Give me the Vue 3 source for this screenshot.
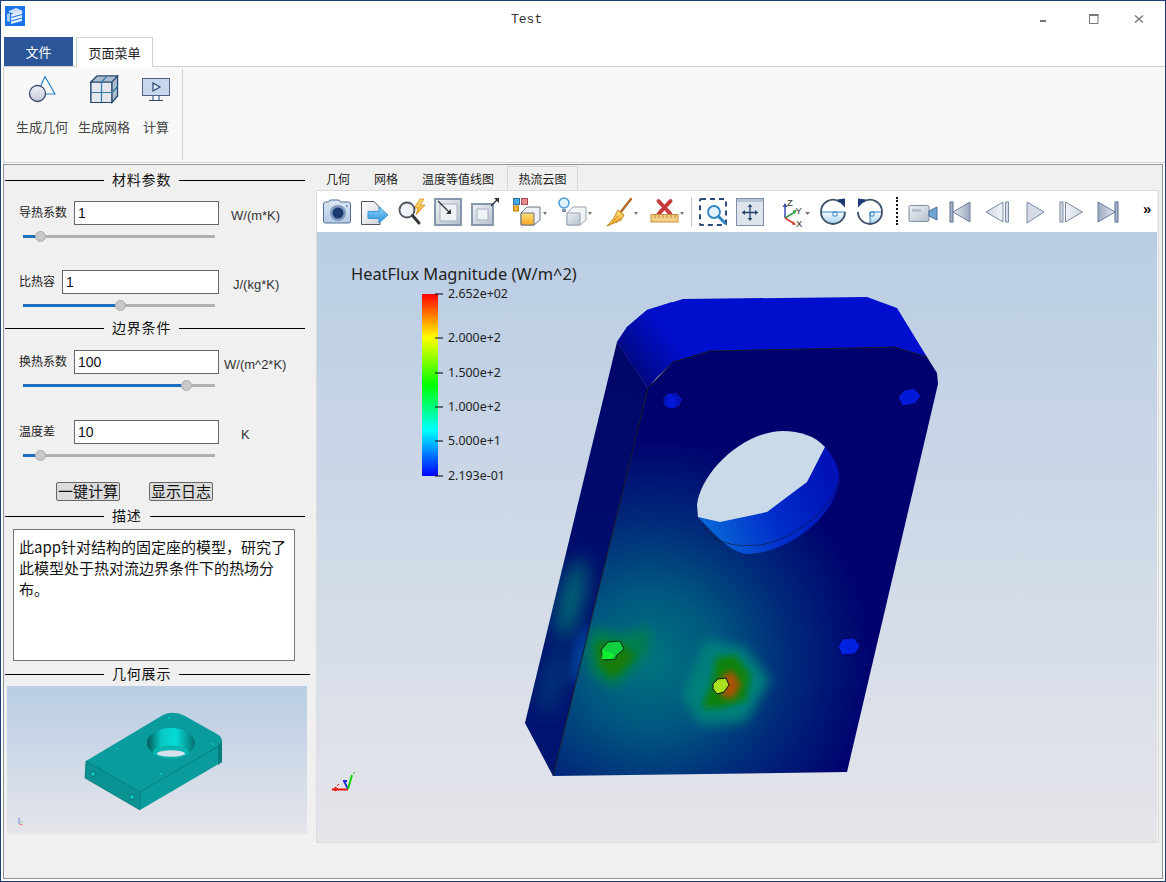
<template>
  <div class="window">
    <header class="titlebar">
      <svg class="app-icon" width="20" height="20" viewBox="0 0 20 20">
        <rect width="20" height="20" fill="#1a73e8" />
        <path d="M3 5.500L11 2l7 3-8 3.500z" fill="#cfe3fb" />
        <path d="M2 8l3-1v9l-3-1z" fill="#a9cdf8" />
        <path d="M6 8.500l11-3v2.500l-11 3zM6 12l11-3v2.500l-11 3zM6 15.500l11-3V15l-11 3z" fill="#e4f0fe" />
      </svg>
      <span class="title">Test</span>
      <div class="win-btns">
        <svg width="10" height="10" viewBox="0 0 10 10"><path d="M0 7h6" stroke="#777" stroke-width="2" /></svg>
        <svg width="10" height="10" viewBox="0 0 10 10"><path d="M.5 1h8.500v8.500H.5z" fill="none" stroke="#777" /><path d="M0 1h9.500" stroke="#777" stroke-width="2" /></svg>
        <svg width="10" height="10" viewBox="0 0 10 10"><path d="M1 1.500l8 7M9 1.500l-8 7" stroke="#777" stroke-width="1.400" /></svg>
      </div>
    </header>

    <nav class="menu-tabs">
      <div class="file-tab">文件</div>
      <div class="page-tab">页面菜单</div>
    </nav>

    <section class="ribbon">
      <div class="ribbon-group">
        <div class="ribbon-btn btn-geo">
          <svg width="28" height="28" viewBox="0 0 28 28">
            <defs>
              <linearGradient id="circ" x1="0" y1="0" x2="0" y2="1">
                <stop offset="0" stop-color="#f2f3f8" /><stop offset="1" stop-color="#c3c7d6" />
              </linearGradient>
            </defs>
            <path d="M17 1.500L27 19H9z" fill="#f8fafc" stroke="#2a82c4" stroke-width="1.200" />
            <circle cx="9.500" cy="18.500" r="8" fill="url(#circ)" stroke="#3c4a72" stroke-width="1.300" />
          </svg>
          <span>生成几何</span>
        </div>
        <div class="ribbon-btn btn-mesh">
          <svg width="30" height="30" viewBox="0 0 30 30">
            <path d="M2 8L8 2H28.500v20l-6 6.500H2z" fill="#dfe5ec" stroke="#27466f" stroke-width="1.200" />
            <path d="M2 8h21v20.500H2z" fill="#e4e8ee" stroke="#27466f" stroke-width="1.200" />
            <path d="M2 8L8 2H28.500L23 8zM23 8l5.500-6v20L23 28.500z" fill="#a9bccd" stroke="#27466f" stroke-width="1.200" />
            <path d="M12.500 8v20.500M2 18.500h21M18 2l-5.500 6M23 18.500l5.500-6" stroke="#3079a8" stroke-width="1.200" fill="none" />
          </svg>
          <span>生成网格</span>
        </div>
        <div class="ribbon-btn btn-calc">
          <svg width="28" height="24" viewBox="0 0 28 24">
            <rect x=".5" y=".5" width="27" height="17" fill="#c7d8ee" stroke="#4c6188" />
            <path d="M11 5l7 4-7 4z" fill="#dfeaf6" stroke="#27466f" stroke-width="1.200" />
            <path d="M11 18v4M17 18v4" stroke="#6a7ca0" stroke-width="1.500" />
            <path d="M7 22.500h14" stroke="#27466f" />
          </svg>
          <span>计算</span>
        </div>
      </div>
    </section>

    <main class="frame">
      <aside class="side">
        <h3 class="group-title">材料参数</h3>
        <div class="param first">
          <div class="param-row">
            <label class="lab-wide">导热系数</label>
            <input value="1" />
            <span class="unit u1">W/(m*K)</span>
          </div>
          <div class="slider"><i :style="{ width: '17px' }"></i><b :style="{ left: '12px' }"></b></div>
        </div>
        <div class="param short">
          <div class="param-row">
            <label class="lab-narrow">比热容</label>
            <input class="long" value="1" />
            <span class="unit u2">J/(kg*K)</span>
          </div>
          <div class="slider"><i :style="{ width: '97px' }"></i><b :style="{ left: '92px' }"></b></div>
        </div>
        <h3 class="group-title second">边界条件</h3>
        <div class="param third">
          <div class="param-row">
            <label class="lab-wide">换热系数</label>
            <input value="100" />
            <span class="unit u3">W/(m^2*K)</span>
          </div>
          <div class="slider"><i :style="{ width: '163px' }"></i><b :style="{ left: '158px' }"></b></div>
        </div>
        <div class="param fourth">
          <div class="param-row">
            <label class="lab-wide">温度差</label>
            <input value="10" />
            <span class="unit u4">K</span>
          </div>
          <div class="slider"><i :style="{ width: '17px' }"></i><b :style="{ left: '12px' }"></b></div>
        </div>
        <div class="actions">
          <button>一键计算</button>
          <button>显示日志</button>
        </div>
        <h3 class="group-title third-title">描述</h3>
        <div class="desc">此app针对结构的固定座的模型，研究了此模型处于热对流边界条件下的热场分布。</div>
        <h3 class="group-title last">几何展示</h3>
        <div class="thumb">
          <svg width="300" height="148" viewBox="7 686 300 148">
            <defs>
              <linearGradient id="bore" x1="0" y1="0" x2="1" y2="0">
                <stop offset="0" stop-color="#045a5a" />
                <stop offset=".3" stop-color="#06c8c4" />
                <stop offset=".6" stop-color="#06dcd8" />
                <stop offset="1" stop-color="#057272" />
              </linearGradient>
            </defs>
            <path d="M86 761L163 715Q173 710 185 716L217 734Q222 737 222 741V762L140 810L85 778z" fill="#0a9c9c" />
            <path d="M86 761L140 792V810L85 778z" fill="#0a9292" stroke="#067272" stroke-width=".6" />
            <path d="M140 792L219 746" stroke="#067676" stroke-width=".7" fill="none" />
            <path d="M218 745Q222 742 222 741V762L218 765z" fill="#067c7c" />
            <ellipse cx="171" cy="743" rx="24" ry="15" fill="url(#bore)" />
            <ellipse cx="171" cy="752" rx="18" ry="6.500" fill="#06b4b0" />
            <ellipse cx="171" cy="753.500" rx="14" ry="3.200" fill="#d6e1ec" />
            <circle cx="93" cy="774" r="2.500" fill="#08c8c8" stroke="#067070" />
            <circle cx="132" cy="797" r="2.500" fill="#08c8c8" stroke="#067070" />
            <circle cx="169" cy="718" r="1" fill="#08c8c8" />
            <circle cx="213" cy="744" r="1" fill="#08c8c8" />
            <circle cx="117" cy="749" r="1" fill="#08c8c8" />
            <circle cx="161" cy="774" r="1" fill="#08c8c8" />
            <path d="M19 824v-6" stroke="#7a7ae0" />
            <path d="M19 824l4-3" stroke="#8ad88a" />
            <path d="M19 824l4 1" stroke="#e88080" />
          </svg>
        </div>
      </aside>

      <section class="view">
        <div class="view-tabs">
          <span class="vt vt1">几何</span>
          <span class="vt vt2">网格</span>
          <span class="vt vt3">温度等值线图</span>
          <span class="vt active">热流云图</span>
        </div>

        <div class="pane">
          <div class="toolbar">
            <svg width="38" height="41" viewBox="0 0 38 41">
              <defs>
                <linearGradient id="camb" x1="0" y1="0" x2="0" y2="1"><stop offset="0" stop-color="#dbe7f3" /><stop offset="1" stop-color="#b5cae2" /></linearGradient>
                <linearGradient id="pageg" x1="0" y1="0" x2="1" y2="1"><stop offset="0" stop-color="#fff" /><stop offset="1" stop-color="#cfd3da" /></linearGradient>
                <linearGradient id="arrow" x1="0" y1="0" x2="0" y2="1"><stop offset="0" stop-color="#8ad4f8" /><stop offset="1" stop-color="#2c92de" /></linearGradient>
                <linearGradient id="steel" x1="0" y1="0" x2="1" y2="1"><stop offset="0" stop-color="#eef1f5" /><stop offset="1" stop-color="#b6c0cd" /></linearGradient>
                <linearGradient id="amber" x1="0" y1="0" x2="0" y2="1"><stop offset="0" stop-color="#ffe27a" /><stop offset="1" stop-color="#f6a623" /></linearGradient>
                <linearGradient id="tri" x1="0" y1="0" x2="1" y2="0"><stop offset="0" stop-color="#e6ebf2" /><stop offset="1" stop-color="#9aa8bd" /></linearGradient>
                <linearGradient id="tri2" x1="1" y1="0" x2="0" y2="0"><stop offset="0" stop-color="#e6ebf2" /><stop offset="1" stop-color="#9aa8bd" /></linearGradient>
                <linearGradient id="face" x1="0" y1="0" x2="0" y2="1"><stop offset="0" stop-color="#f6fbff" /><stop offset="1" stop-color="#a9d4f0" /></linearGradient>
              </defs>
              <path d="M.5 13q0-2 2-2h3l1.500-2h9l1.500 2h8q2 0 2 2v17q0 2-2 2H2.500q-2 0-2-2z" fill="url(#camb)" stroke="#4f6f98" />
              <circle cx="15" cy="22" r="8" fill="#7d97bd" />
              <circle cx="15" cy="22" r="5.500" fill="#1c3a72" />
              <circle cx="24" cy="15" r="1" fill="#6d8bb5" />
            </svg>
            <svg width="36" height="41" viewBox="0 0 36 41">
              <path d="M.5 10.500H13l6 6V33.500H.5z" fill="url(#pageg)" stroke="#4d5560" />
              <path d="M7 20.500h11V16l9 8-9 8v-4.500H7z" fill="url(#arrow)" stroke="#3b94d6" />
            </svg>
            <svg width="37" height="41" viewBox="0 0 37 41">
              <path d="M23 8l-6 9h4l-2 7 9-10h-5l4-6z" fill="url(#amber)" stroke="#d9891c" stroke-width=".8" />
              <circle cx="10" cy="19" r="7.500" fill="#eef3f8" stroke="#4d5560" stroke-width="1.800" />
              <path d="M15.500 24.500L22 32" stroke="#33373d" stroke-width="3" stroke-linecap="round" />
            </svg>
            <svg width="37" height="41" viewBox="0 0 37 41">
              <rect x="1" y="8" width="26" height="26" fill="url(#steel)" stroke="#8596ad" stroke-width="2" />
              <rect x="6" y="13" width="17" height="17" fill="#eef1f5" stroke="#a5b1c2" />
              <path d="M4 10l12 12" stroke="#27303c" stroke-width="1.200" />
              <path d="M17 18v5h-5z" fill="#27303c" />
            </svg>
            <svg width="42" height="41" viewBox="0 0 42 41">
              <rect x="1" y="13" width="21" height="21" fill="url(#steel)" stroke="#8596ad" stroke-width="2" />
              <rect x="6" y="18" width="11" height="11" fill="#eef1f5" stroke="#a5b1c2" />
              <path d="M20 15l6-6" stroke="#27303c" stroke-width="1.200" />
              <path d="M23 7h5v5z" fill="#27303c" />
            </svg>
            <svg width="45" height="41" viewBox="0 0 45 41">
              <rect x=".5" y="7.500" width="6" height="6" fill="#46a8e6" stroke="#2a6e9e" />
              <rect x="8.500" y="7.500" width="6" height="6" fill="#e58b8b" stroke="#a04d4d" />
              <rect x=".5" y="15" width="5" height="5" fill="#f3b53a" stroke="#b87c18" />
              <path d="M8 22l6-6h13v13l-6 5H8z" fill="#eef1f5" stroke="#6d7785" />
              <path d="M8 22h13v12H8z" fill="url(#amber)" stroke="#6d7785" />
              <path d="M30 21h4l-2 3z" fill="#777" />
            </svg>
            <svg width="47" height="41" viewBox="0 0 47 41">
              <circle cx="6" cy="12" r="5" fill="#dff1fc" stroke="#4a9bd4" stroke-width="1.500" />
              <path d="M4 18h4v3H4z" fill="#8a96a8" />
              <path d="M9 22l6-6h13v13l-6 5H9z" fill="#f1f3f6" stroke="#9aa5b3" />
              <path d="M9 22h13v12H9z" fill="url(#steel)" stroke="#9aa5b3" />
              <path d="M30 21h4l-2 3z" fill="#777" />
            </svg>
            <svg width="45" height="41" viewBox="0 0 45 41">
              <path d="M26 8L15 22" stroke="#b66a2a" stroke-width="2.500" stroke-linecap="round" />
              <path d="M13 19l6 5-3 5-14 6q7-6 11-16z" fill="url(#amber)" stroke="#c4821e" />
              <path d="M8 31l5-6M11 32l4-5" stroke="#c4821e" stroke-width=".8" />
              <path d="M29 21h4l-2 3z" fill="#777" />
            </svg>
            <svg width="41" height="41" viewBox="0 0 41 41">
              <path d="M8.500 10l12 13M20.500 10l-12 13" stroke="#c63a3a" stroke-width="4" stroke-linecap="round" />
              <rect x="1" y="23.500" width="27" height="7.500" fill="#f4cd86" stroke="#c58e3e" />
              <path d="M5 24v3M9 24v3M13 24v3M17 24v3M21 24v3M25 24v3" stroke="#a97730" stroke-width=".8" />
              <path d="M30 21h4l-2 3z" fill="#777" />
            </svg>
            <i class="sep"></i>
            <svg width="37" height="41" viewBox="0 0 37 41">
              <rect x="1" y="8" width="26" height="26" rx="1" fill="none" stroke="#2e4a78" stroke-width="2" stroke-dasharray="5 4" />
              <circle cx="15" cy="21" r="6" fill="#e4f0fa" stroke="#2f86c4" stroke-width="1.800" />
              <path d="M19.500 25.500L26 32" stroke="#2f86c4" stroke-width="3" stroke-linecap="round" />
            </svg>
            <svg width="45" height="41" viewBox="0 0 45 41">
              <rect x=".5" y="7.500" width="27" height="27" fill="#dde4ec" stroke="#7d8ea6" />
              <rect x="1" y="8" width="26" height="3" fill="#b7c4d4" />
              <path d="M14 14v15M6.500 21.500h15" stroke="#27466f" stroke-width="1.300" />
              <path d="M14 13l-2.500 3h5zM14 30l-2.500-3h5zM6 21.500l3-2.500v5zM22 21.500l-3-2.500v5z" fill="#27466f" />
            </svg>
            <svg width="39" height="41" viewBox="0 0 39 41">
              <path d="M4 27v-12" stroke="#2f4fa8" stroke-width="1.500" />
              <path d="M4 12l-2.500 4h5z" fill="#2f4fa8" />
              <path d="M4 27l10-6" stroke="#2c9a48" stroke-width="1.500" />
              <path d="M16 19l-4.500 .500 2 3.500z" fill="#2c9a48" />
              <path d="M4 27l8 5" stroke="#d8403c" stroke-width="1.500" />
              <path d="M15 34l-4.500 -.500 2-3.500z" fill="#d8403c" />
              <text x="6" y="15" class="axis">Z</text>
              <text x="14.500" y="23" class="axis">Y</text>
              <text x="15" y="36" class="axis">X</text>
              <path d="M24 21h5l-2.500 3z" fill="#777" />
            </svg>
            <svg width="37" height="41" viewBox="0 0 37 41">
              <path d="M1 21a12 12 0 0 0 24 0z" fill="url(#face)" />
              <path d="M13 21h4v4h-4z" fill="none" stroke="#3f8ed0" />
              <path d="M1 21h24" stroke="#2e80c4" />
              <path d="M1 21a12 12 0 0 1 19-10M25 21a12 12 0 0 1-24 0" fill="none" stroke="#3d5068" stroke-width="1.800" />
              <path d="M17 8.500l8-1v9z" fill="#1c3a72" />
            </svg>
            <svg width="39" height="41" viewBox="0 0 39 41">
              <path d="M13 21h12a12 12 0 0 1-12 12z" fill="url(#face)" />
              <path d="M13 21h4v4h-4z" fill="none" stroke="#3f8ed0" />
              <path d="M13 21h12M13 21v12" stroke="#2e80c4" />
              <path d="M25 21a12 12 0 0 0-19-10M1 21a12 12 0 0 0 24 0" fill="none" stroke="#3d5068" stroke-width="1.800" />
              <path d="M9 8.500l-8-1v9z" fill="#1c3a72" />
            </svg>
            <i class="dots"></i>
            <svg width="41" height="41" viewBox="0 0 41 41">
              <rect x="1" y="14.500" width="20" height="16" rx="1.500" fill="url(#steel)" stroke="#7d8ea6" />
              <rect x="4" y="18" width="9" height="3" fill="#b6c0cd" />
              <path d="M21 20l8-4v13l-8-4z" fill="#6fa5cf" stroke="#4d6f96" />
            </svg>
            <svg width="36" height="41" viewBox="0 0 36 41">
              <rect x="1" y="11" width="3" height="20" fill="#a9b5c8" stroke="#5a6f92" />
              <path d="M4 21l17-10v20z" fill="url(#tri)" stroke="#6d7f9c" />
            </svg>
            <svg width="41" height="41" viewBox="0 0 41 41">
              <path d="M1 21l17-10v20z" fill="url(#tri2)" fill-opacity=".5" stroke="#7b8ba5" />
              <rect x="20.500" y="11" width="3" height="20" fill="#d5dbe5" stroke="#7b8ba5" />
            </svg>
            <svg width="33" height="41" viewBox="0 0 33 41">
              <path d="M1 11l17 10-17 11z" fill="#d5dbe5" stroke="#7b8ba5" />
            </svg>
            <svg width="38" height="41" viewBox="0 0 38 41">
              <rect x="1" y="11" width="3" height="20" fill="#d5dbe5" stroke="#7b8ba5" />
              <path d="M6.500 11l17 10-17 10z" fill="url(#tri)" fill-opacity=".5" stroke="#7b8ba5" />
            </svg>
            <svg width="46" height="41" viewBox="0 0 46 41">
              <path d="M1 11l17 10-17 10z" fill="url(#tri2)" stroke="#6d7f9c" />
              <rect x="18" y="11" width="3" height="20" fill="#a9b5c8" stroke="#5a6f92" />
            </svg>
            <span class="more">»</span>
          </div>

          <div class="canvas">
            <svg width="840" height="610" viewBox="317 232 840 610">
              <defs>
                <linearGradient id="bar" x1="0" y1="1" x2="0" y2="0">
                  <stop offset="0" stop-color="#0000ff" />
                  <stop offset=".25" stop-color="#00ffff" />
                  <stop offset=".5" stop-color="#00ff00" />
                  <stop offset=".76" stop-color="#ffff00" />
                  <stop offset="1" stop-color="#ff0000" />
                </linearGradient>
                <radialGradient id="glow" gradientUnits="userSpaceOnUse" cx="650" cy="660" r="225">
                  <stop offset="0" stop-color="#00747e" />
                  <stop offset=".3" stop-color="#005880" />
                  <stop offset=".62" stop-color="#002a7a" />
                  <stop offset="1" stop-color="#00006e" />
                </radialGradient>
                <linearGradient id="corner" gradientUnits="userSpaceOnUse" x1="622" y1="375" x2="672" y2="335">
                  <stop offset="0" stop-color="#000670" />
                  <stop offset="1" stop-color="#000fce" />
                </linearGradient>
                <linearGradient id="sideBase" gradientUnits="userSpaceOnUse" x1="600" y1="350" x2="540" y2="760">
                  <stop offset="0" stop-color="#000668" />
                  <stop offset="1" stop-color="#001470" />
                </linearGradient>
                <linearGradient id="wall" gradientUnits="userSpaceOnUse" x1="700" y1="540" x2="830" y2="480">
                  <stop offset="0" stop-color="#0a70d8" />
                  <stop offset=".5" stop-color="#0030cc" />
                  <stop offset="1" stop-color="#0012b8" />
                </linearGradient>
                <filter id="soft3" x="-40%" y="-40%" width="180%" height="180%"><feGaussianBlur stdDeviation="3" /></filter>
                <filter id="soft6" x="-60%" y="-60%" width="220%" height="220%"><feGaussianBlur stdDeviation="6" /></filter>
                <filter id="soft10" x="-150%" y="-60%" width="400%" height="220%"><feGaussianBlur stdDeviation="10" /></filter>
                <clipPath id="frontClip">
                  <path d="M648 388L673 362L710 351L895 347L927 357L937 373L938 384L847 772L553 776z" />
                </clipPath>
                <clipPath id="sideClip">
                  <path d="M617 342L648 388L553 776L525 723z" />
                </clipPath>
              </defs>

              <text x="351" y="280" class="cb-title">HeatFlux Magnitude (W/m^2)</text>
              <rect x="422" y="294" width="16" height="182" fill="url(#bar)" />
              <g stroke="#000" stroke-width="1.200">
                <path d="M435 294h8M435 338h8M435 373h8M435 407h8M435 441h8M435 476h8" />
              </g>
              <text x="448" y="298" class="cb-num">2.652e+02</text>
              <text x="448" y="342" class="cb-num">2.000e+2</text>
              <text x="448" y="377" class="cb-num">1.500e+2</text>
              <text x="448" y="411" class="cb-num">1.000e+2</text>
              <text x="448" y="445" class="cb-num">5.000e+1</text>
              <text x="448" y="480" class="cb-num">2.193e-01</text>

              <path d="M617 342L627 327L647 310L683 299L867 297L897 308L927 357L895 347L710 351L673 362L657 377L648 388z" fill="#000fce" />
              <path d="M617 342L627 327L647 310L672 302L684 354L673 362L657 377L648 388z" fill="url(#corner)" />
              <path d="M617 342L648 388L553 776L525 723z" fill="url(#sideBase)" />
              <g clip-path="url(#sideClip)">
                <ellipse cx="571" cy="600" rx="11" ry="42" transform="rotate(14 571 600)" fill="#007276" filter="url(#soft10)" />
                <ellipse cx="580" cy="655" rx="6" ry="30" transform="rotate(14 580 655)" fill="#0050a8" filter="url(#soft6)" />
                <ellipse cx="553" cy="680" rx="10" ry="36" transform="rotate(14 553 680)" fill="#003a78" filter="url(#soft10)" />
              </g>
              <path d="M648 388L673 362L710 351L895 347L927 357L937 373L938 384L847 772L553 776z" fill="url(#glow)" />
              <g clip-path="url(#frontClip)">
                <path d="M592 628L625 635L650 628L648 652L628 675L615 688L592 675L586 650z" fill="#067e50" filter="url(#soft6)" />
                <path d="M597 642L622 645L636 655L622 672L610 678L598 664z" fill="#147c08" filter="url(#soft3)" />
                <path d="M705 640L745 648L770 680L745 722L700 725L682 695z" fill="#04807a" filter="url(#soft6)" />
                <path d="M716 658L735 655L750 674L746 700L720 708L702 708L712 682z" fill="#0a8208" filter="url(#soft3)" />
                <path d="M722 676L732 670L741 684L734 698L722 698z" fill="#a85200" filter="url(#soft3)" />
              </g>
              <path d="M648 388L673 362L710 351L895 347L927 357" fill="none" stroke="#111" stroke-width=".8" />
              <path d="M648 388L553 776" fill="none" stroke="#111" stroke-width=".8" />

              <path d="M698 517C715 535 730 552 747 554C790 553 835 515 839 482C840 468 833 456 825 447z" fill="url(#wall)" />
              <path d="M704 528C720 548 745 546 760 545C795 540 835 505 838 482" fill="none" stroke="#111" stroke-width=".7" stroke-dasharray="3 1" />
              <path d="M697 505C700 475 740 432 783 431C800 431 815 436 825 447L807 482L767 512L720 522L698 517z" fill="#cbdae8" />

              <path d="M662 399l6-6 8-1 7 7-4 8-9 2-6-3z" fill="#0012b8" stroke="#000050" />
              <path d="M668 393l8 5-1 10-8-1z" fill="#0018d8" />
              <path d="M898 397l6-7 10-2 7 8-6 8-13 2z" fill="#0018d8" stroke="#000050" />
              <path d="M838 647l4-8 12-1 6 8-5 8-13 1z" fill="#0022e0" stroke="#000060" />
              <path d="M601 650l7-8 12-1 4 8-8 7 0 3-12 1-2-5z" fill="#10d040" stroke="#0a2a14" />
              <path d="M603 650l11 4-1 5-11 0z" fill="#10f030" />
              <path d="M713 684l5-5 8-1 3 7-5 7-7 2-4-5z" fill="#a8e020" stroke="#111" />

              <path d="M332 789.500h16" stroke="#f0100c" stroke-width="2" />
              <path d="M335 787l3 2-3 2zM337 786l2-2" stroke="#e0100c" fill="none" />
              <path d="M348 789L344 781" stroke="#1c2ad8" stroke-width="1.800" />
              <path d="M343 780h4v2h-4z" fill="#1c2ad8" />
              <path d="M348 789L352 775" stroke="#10d010" stroke-width="2" />
              <path d="M353 774l2-2" stroke="#10d010" />
            </svg>
          </div>
        </div>
      </section>
    </main>
  </div>
</template>

<script setup>
</script>

<style>
html, body { margin: 0; background: #fff; }
</style>

<style scoped>
.window {
  width: 1166px;
  height: 882px;
  box-sizing: border-box;
  border: 1px solid #1d3f73;
  background: #fff;
  font-family: "Noto Sans CJK SC", "Liberation Sans", sans-serif;
  display: flex;
  flex-direction: column;
  overflow: hidden;
}
.titlebar {
  height: 35px;
  flex: none;
  display: flex;
  align-items: center;
  position: relative;
}
.app-icon { margin: -5px 0 0 4px; }
.title {
  position: absolute;
  left: 510px;
  top: 11px;
  font: 13px "Liberation Mono", monospace;
  color: #333;
}
.win-btns {
  margin-left: auto;
  display: flex;
  gap: 35px;
  padding-right: 21px;
  margin-top: 1px;
}
.win-btns svg { display: block; }
.win-btns svg:nth-child(1) { margin-right: 4px; }
.menu-tabs {
  height: 30px;
  flex: none;
  display: flex;
  align-items: flex-end;
  padding-left: 3px;
  gap: 3px;
}
.file-tab {
  width: 69px;
  height: 29px;
  background: #2b579a;
  color: #fff;
  font-size: 13px;
  line-height: 29px;
  text-align: center;
}
.page-tab {
  width: 77px;
  height: 30px;
  box-sizing: border-box;
  border: 1px solid #d2d2d2;
  border-bottom: none;
  background: #fff;
  color: #222;
  font-size: 13px;
  line-height: 29px;
  text-align: center;
  margin-bottom: -1px;
  position: relative;
  z-index: 1;
}
.ribbon {
  height: 97px;
  flex: none;
  box-sizing: border-box;
  margin: 0 0 0 2px;
  border: 1px solid #d2d2d2;
  border-right: none;
  background: #f8f8f8;
  display: flex;
}
.ribbon-group {
  width: 178px;
  margin: 2px 0 2px 0;
  border-right: 1px solid #d2d2d2;
  position: relative;
}
.ribbon-btn {
  position: absolute;
  display: flex;
  flex-direction: column;
  align-items: center;
  font-size: 13px;
  color: #444;
  white-space: nowrap;
}
.ribbon-btn span { position: absolute; }
.btn-geo { left: 24px; top: 6px; }
.btn-geo span { top: 42px; }
.btn-mesh { left: 85px; top: 5px; }
.btn-mesh span { top: 43px; }
.btn-calc { left: 138px; top: 9px; }
.btn-calc span { top: 39px; }

.frame {
  flex: 1;
  margin: 1px 2px 2px 2px;
  border: 1px solid #8c929c;
  background: #f0f0f0;
  display: flex;
  min-height: 0;
}
.side {
  width: 312px;
  flex: none;
  padding-top: 5px;
  font-size: 12px;
  color: #111;
}
.group-title {
  margin: 0 0 0 1px;
  width: 300px;
  height: 18px;
  display: flex;
  align-items: center;
  gap: 8px;
  font-size: 14px;
  font-weight: 400;
  line-height: 16px;
  letter-spacing: .8px;
  white-space: nowrap;
}
.group-title::before {
  content: "";
  width: 99px;
  margin-top: 2px;
  border-top: 1px solid #000;
}
.group-title::after {
  content: "";
  flex: 1;
  margin-top: 2px;
  border-top: 1px solid #000;
}
.group-title.second { margin-top: 6px; }
.group-title.third-title { margin-top: 5px; }
.group-title.last { margin-top: 3px; width: 305px; }

.param { padding-left: 15px; }
.param.first { margin-top: 13px; height: 69px; }
.param.short { height: 42px; }
.param.third { margin-top: 14px; height: 70px; }
.param.fourth { height: 62px; }
.param-row {
  display: flex;
  align-items: center;
  height: 24px;
}
.param-row label {
  color: #222;
  margin-top: -3px;
  flex: none;
}
.lab-wide { width: 55px; }
.lab-narrow { width: 43px; }
.param-row input {
  width: 145px;
  height: 24px;
  box-sizing: border-box;
  border: 1px solid #666;
  background: #fff;
  padding: 0 3px;
  outline: none;
  font: 14px "Liberation Sans", sans-serif;
  color: #111;
}
.param-row input.long { width: 157px; }
.unit {
  font: 13px "Liberation Sans", sans-serif;
  color: #333;
  white-space: nowrap;
  margin-top: 5px;
}
.u1 { margin-left: 12px; }
.u2 { margin-left: 14px; }
.u3 { margin-left: 5px; }
.u4 { margin-left: 22px; }
.slider {
  position: relative;
  width: 192px;
  height: 3px;
  background: #b0b0b0;
  margin: 10px 0 0 4px;
}
.slider i {
  position: absolute;
  left: 0;
  top: 0;
  height: 3px;
  background: #1a6fbf;
}
.slider b {
  position: absolute;
  top: -4px;
  width: 11px;
  height: 11px;
  box-sizing: border-box;
  border-radius: 50%;
  background: #c8c8c8;
  border: 1px solid #adadad;
}
.actions {
  padding-left: 52px;
  display: flex;
  gap: 29px;
}
.actions button {
  width: 64px;
  height: 19px;
  box-sizing: border-box;
  padding: 0 0 2px;
  border: 1px solid #666;
  border-radius: 2px;
  background: #dcdcdc;
  font: 15px/15px "Noto Sans CJK SC", sans-serif;
  color: #111;
}
.desc {
  margin: 5px 0 0 9px;
  width: 282px;
  height: 132px;
  box-sizing: border-box;
  border: 1px solid #777;
  background: #fff;
  padding: 6px 6px 0 5px;
  font-size: 15px;
  line-height: 21px;
  color: #111;
}
.thumb {
  margin: 4px 0 0 3px;
  width: 300px;
  height: 148px;
  background: linear-gradient(#b9cde4, #e5e5ea);
}
.thumb svg { display: block; }

.view {
  flex: none;
  width: 846px;
  padding-top: 1px;
}
.view-tabs {
  height: 24px;
  font-size: 12px;
  color: #222;
  position: relative;
}
.vt { position: absolute; top: 4px; white-space: nowrap; }
.vt1 { left: 10px; }
.vt2 { left: 58px; }
.vt3 { left: 106px; }
.vt.active {
  left: 191px;
  top: 0;
  width: 71px;
  height: 24px;
  box-sizing: border-box;
  border: 1px solid #d8d8d8;
  border-bottom: none;
  text-align: center;
  line-height: 24px;
}
.pane {
  width: 843px;
  box-sizing: border-box;
  border: 1px solid #dcdcdc;
}
.toolbar {
  height: 41px;
  width: 840px;
  box-sizing: border-box;
  background: #fff;
  display: flex;
  align-items: flex-start;
  padding-left: 6px;
  position: relative;
}
.toolbar svg { flex: none; display: block; }
.axis { font: 9.500px "Liberation Sans", sans-serif; fill: #333; }
.sep {
  flex: none;
  width: 1px;
  height: 30px;
  margin: 6px 7px 0 0;
  background: #c8c8c8;
}
.dots {
  flex: none;
  width: 0;
  height: 28px;
  margin: 6px 10px 0 0;
  border-left: 2px dotted #111;
}
.more {
  position: absolute;
  left: 826px;
  top: 9px;
  font: 15px "Liberation Sans", sans-serif;
  font-weight: 700;
  color: #111;
}
.canvas {
  width: 840px;
  height: 610px;
  background: linear-gradient(#b9cde4, #e5e5ea);
}
.canvas svg { display: block; }
.cb-title { font: 16.400px "Noto Sans", sans-serif; fill: #222; }
.cb-num { font: 12.400px "Noto Sans", sans-serif; fill: #222; }
</style>
